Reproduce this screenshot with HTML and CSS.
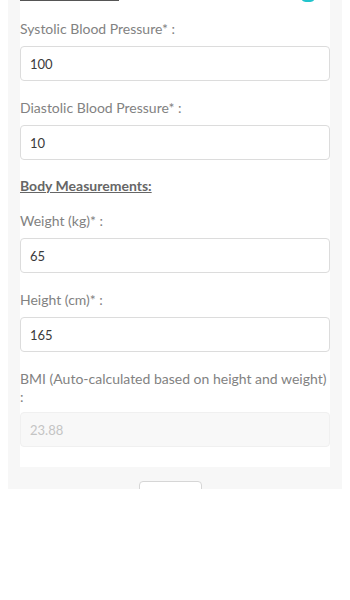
FILE: index.html
```html
<!DOCTYPE html>
<html lang="en">
<head>
<meta charset="utf-8">
<title>Vitals</title>
<link rel="stylesheet" href="styles.css">
</head>
<body>
<div class="page">
  <div class="card">
    <div class="top-row">
      <span class="top-line"></span>
      <span class="top-dot"></span>
    </div>
    <div class="group">
      <label class="label">Systolic Blood Pressure* :</label>
      <input class="field" type="text" value="100">
    </div>
    <div class="group">
      <label class="label">Diastolic Blood Pressure* :</label>
      <input class="field" type="text" value="10">
    </div>
    <div class="section-title">Body Measurements:</div>
    <div class="group">
      <label class="label">Weight (kg)* :</label>
      <input class="field" type="text" value="65">
    </div>
    <div class="group">
      <label class="label">Height (cm)* :</label>
      <input class="field" type="text" value="165">
    </div>
    <div class="group last">
      <label class="label">BMI (Auto-calculated based on height and weight) :</label>
      <input class="field readonly" type="text" value="23.88" readonly>
    </div>
  </div>
  <div class="actions">
    <button class="btn" type="button" aria-label="Submit"></button>
  </div>
</div>
</body>
</html>
```
FILE: styles.css
```css
* { box-sizing: border-box; }
body {
  margin: 0 8px;
  font-family: Lato, "Noto Sans", sans-serif;
  background: #fff;
}
.page {
  background: #f7f7f7;
  height: 489px;
  overflow: hidden;
  padding: 0 12px;
}
.card {
  background: #fff;
  padding-bottom: 20px;
}
.top-row {
  display: flex;
  justify-content: space-between;
  align-items: flex-start;
  height: 2px;
  padding-right: 16px;
}
.top-line {
  width: 99px;
  height: 1px;
  background: #555;
}
.top-dot {
  width: 12px;
  height: 2px;
  background: #22c4cc;
  border-radius: 0 0 6px 6px / 0 0 2px 2px;
}
.group {
  display: flex;
  flex-direction: column;
  padding-top: 18px;
}
.label {
  font-size: 14px;
  line-height: 18px;
  color: #828282;
  margin-bottom: 8px;
}
.group.last .label { margin-bottom: 6px; }
.field {
  height: 35px;
  width: 100%;
  border: 1px solid #dcdcdc;
  border-radius: 4px;
  padding: 0 9px;
  font-family: Lato, "Noto Sans", sans-serif;
  font-size: 13px;
  color: #3a3a3a;
  background: #fff;
  outline: none;
}
.field.readonly {
  background: #f8f8f8;
  border-color: #f0f0f0;
  color: #c4c4c4;
}
.section-title {
  padding-top: 16px;
  font-size: 14px;
  line-height: 20px;
  font-weight: bold;
  color: #666;
  text-decoration: underline;
  margin-bottom: -2px;
}
.actions {
  display: flex;
  justify-content: center;
  padding-top: 14px;
  padding-right: 9px;
}
.btn {
  width: 63px;
  height: 34px;
  border: 1px solid #d6d6d6;
  border-radius: 4px;
  background: #fff;
}
```
